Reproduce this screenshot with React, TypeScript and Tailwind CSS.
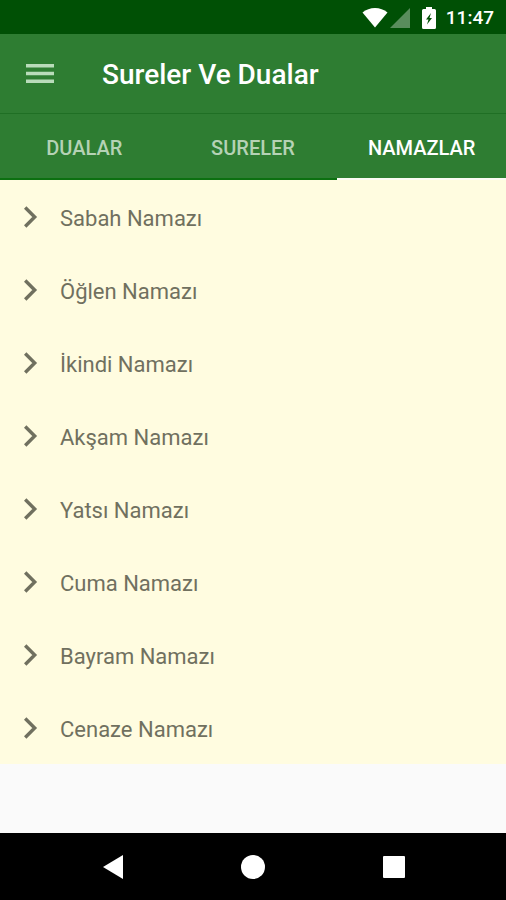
import React from "react";

const tabs = ["DUALAR", "SURELER", "NAMAZLAR"];

const prayers = [
  "Sabah Namazı",
  "Öğlen Namazı",
  "İkindi Namazı",
  "Akşam Namazı",
  "Yatsı Namazı",
  "Cuma Namazı",
  "Bayram Namazı",
  "Cenaze Namazı",
];

const StatusBar: React.FC = () => (
  <div className="flex h-[34px] items-center justify-end bg-[#005005] pr-3 pt-0.5 text-white">
    <svg viewBox="0 0 26 20" className="h-5 w-[26px]" fill="currentColor">
      <path d="M13 19.500 .5 4.500C4 1.500 8.300 0 13 0s9 1.500 12.500 4.500z" />
    </svg>
    <svg viewBox="0 0 20 20" className="ml-0.5 h-5 w-5" fill="currentColor">
      <path d="M20 0v20H0z" opacity="0.35" />
    </svg>
    <svg viewBox="0 0 14 22" className="ml-3 h-[22px] w-3.5" fill="currentColor">
      <path
        fillRule="evenodd"
        d="M4 0h6v2h2.500Q14 2 14 3.500v17Q14 22 12.500 22h-11Q0 22 0 20.500v-17Q0 2 1.500 2H4zM9 6 4 12.500h2.500L5 17.500 10 11H7.500z"
      />
    </svg>
    <span className="ml-2.5 text-[19px] font-medium">11:47</span>
  </div>
);

const Header: React.FC = () => (
  <header className="flex h-20 items-center border-b border-[#1f6f24] bg-[#2e7d32] px-[26px]">
    <button type="button" aria-label="Menu" className="text-[#b9dcba]">
      <svg viewBox="0 0 28 20" className="h-5 w-7" fill="currentColor">
        <path d="M0 0h28v3.500H0zM0 7.800h28v3.500H0zM0 15.600h28v3.500H0z" />
      </svg>
    </button>
    <h1 className="ml-12 pt-0.5 text-[28px] font-medium text-white">Sureler Ve Dualar</h1>
  </header>
);

const App: React.FC = () => {
  const [active, setActive] = React.useState("NAMAZLAR");

  return (
    <div className="flex min-h-screen flex-col bg-[#fafafa] font-[Roboto,sans-serif]">
      <StatusBar />
      <Header />
      <nav className="grid h-[66px] grid-cols-3 bg-[#2e7d32]">
        {tabs.map((tab) => (
          <button
            key={tab}
            type="button"
            onClick={() => setActive(tab)}
            className={
              tab === active
                ? "border-b-2 border-[#fbfcf4] pt-1 text-xl font-medium text-white"
                : "border-b-2 border-[#0c7010] pt-1 text-xl font-medium text-[#b5d2b5]"
            }
          >
            {tab}
          </button>
        ))}
      </nav>
      <main className="flex-1">
        <ul className="bg-[#fffce0]">
          {prayers.map((prayer) => (
            <li key={prayer}>
              <button type="button" className="flex h-[73px] w-full items-center pl-6 text-left text-[#70705f]">
                <svg viewBox="0 0 14 22" className="h-[22px] w-3.5" fill="none" stroke="currentColor" strokeWidth="3.4">
                  <path d="M1.200 1.500 10.700 11 1.200 20.500" />
                </svg>
                <span className="ml-[22px] pt-1 text-[22px]">{prayer}</span>
              </button>
            </li>
          ))}
        </ul>
      </main>
      <footer className="grid h-[67px] grid-cols-[1fr_56px_1fr] items-center bg-black text-white">
        <button type="button" aria-label="Back" className="flex justify-center">
          <svg viewBox="0 0 22 26" className="h-[26px] w-[22px]" fill="currentColor">
            <path d="M21 1v24L1 13z" />
          </svg>
        </button>
        <button type="button" aria-label="Home" className="flex justify-center">
          <svg viewBox="0 0 24 24" className="size-6" fill="currentColor">
            <circle cx="12" cy="12" r="12" />
          </svg>
        </button>
        <button type="button" aria-label="Recent apps" className="flex justify-center">
          <svg viewBox="0 0 22 22" className="size-[22px]" fill="currentColor">
            <rect width="22" height="22" rx="1" />
          </svg>
        </button>
      </footer>
    </div>
  );
};

export default App;
